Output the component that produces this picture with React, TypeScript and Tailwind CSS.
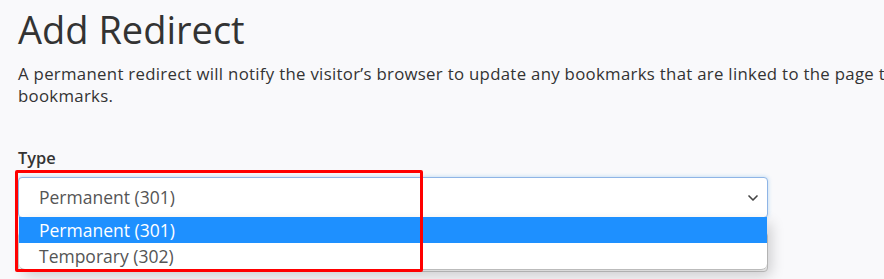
import { ChevronDown } from "lucide-react";

export default function App() {
  return (
    <div
      className="h-[279px] w-[884px] overflow-hidden bg-[#f9f9fb] text-[#333]"
      style={{ fontFamily: '"Open Sans", "Liberation Sans", sans-serif' }}
    >
      <div className="w-[1500px] pl-[18px] pt-[6px]">
        {/* Heading */}
        <h1 className="text-[38px] font-normal leading-[47px] text-[#333]">Add Redirect</h1>
        <p className="mt-[10px] whitespace-nowrap text-[16.8px] leading-[22px] tracking-[0.3px] text-[#333]">
          A permanent redirect will notify the visitor’s browser to update any bookmarks that are linked to the page that
          has moved. A temporary redirect will not update the visitor’s
          <br />
          bookmarks.
        </p>

        {/* Type field */}
        <div className="mt-[40px] w-[750px]">
          <label className="block text-[16.4px] font-semibold leading-[22px] text-[#333]">Type</label>
          <div className="relative mt-[8px]">
            <div className="flex h-[41px] items-center justify-between rounded-[4px] border border-[#8fb5e6] bg-white pl-[20px] pr-[6px] shadow-[0_0_4px_rgba(102,175,233,0.45)]">
              <span className="text-[17.5px] text-[#555]">Permanent (301)</span>
              <ChevronDown className="h-4 w-4 text-[#444]" strokeWidth={2.5} />
            </div>

            {/* open dropdown list */}
            <ul className="absolute left-[1px] right-[1px] top-[40px] z-10 overflow-hidden rounded-b-[6px] border-b border-[#bbb] bg-white text-[17.5px] shadow-[4px_6px_14px_rgba(0,0,0,0.18)]">
              <li className="flex h-[26px] items-center bg-[#1e90ff] pl-[20px] text-white">Permanent (301)</li>
              <li className="flex h-[26px] items-center pl-[20px] text-[#555]">Temporary (302)</li>
            </ul>

            {/* annotation box */}
            <div className="pointer-events-none absolute left-[-3px] top-[-7px] z-20 h-[102px] w-[408px] rounded-[2px] border-[3px] border-[#ff0000]" />

            {/* next field (mostly hidden) */}
            <div className="mt-[14px] h-[40px] rounded-[4px] border border-[#ccc] bg-white" />
          </div>
        </div>
      </div>
    </div>
  );
}
